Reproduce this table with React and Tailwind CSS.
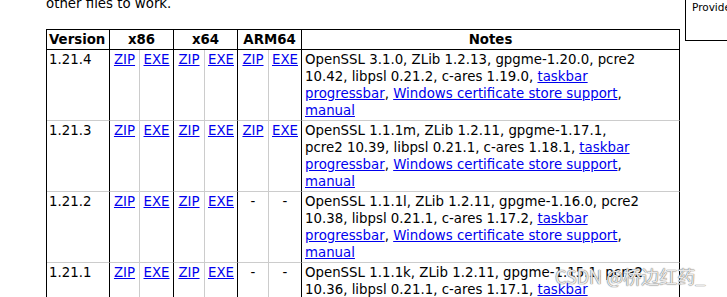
const A = ({ children }) => (
  <a href="#" className="text-[#0000ee] underline">
    {children}
  </a>
)

const rows = [
  {
    v: '1.21.4',
    arm: true,
    notes: [
      'OpenSSL 3.1.0, ZLib 1.2.13, gpgme-1.20.0, pcre2',
      '10.42, libpsl 0.21.2, c-ares 1.19.0, ',
    ],
  },
  {
    v: '1.21.3',
    arm: true,
    notes: [
      'OpenSSL 1.1.1m, ZLib 1.2.11, gpgme-1.17.1,',
      'pcre2 10.39, libpsl 0.21.1, c-ares 1.18.1, ',
    ],
  },
  {
    v: '1.21.2',
    arm: false,
    notes: [
      'OpenSSL 1.1.1l, ZLib 1.2.11, gpgme-1.16.0, pcre2',
      '10.38, libpsl 0.21.1, c-ares 1.17.2, ',
    ],
  },
  {
    v: '1.21.1',
    arm: false,
    notes: [
      'OpenSSL 1.1.1k, ZLib 1.2.11, gpgme-1.15.1, pcre2',
      '10.36, libpsl 0.21.1, c-ares 1.17.1, ',
    ],
  },
]

const gray = 'border-r border-b border-r-[#cccccc] border-b-[#cccccc]'
const black = 'border-r border-b border-r-black border-b-[#cccccc]'

export default function App() {
  return (
    <div
      className="relative w-[727px] h-[297px] overflow-hidden bg-white text-black text-[13.33px] leading-[17px]"
      style={{ fontFamily: '"DejaVu Sans", Verdana, sans-serif' }}
    >
      <div className="flex">
        <div className="w-[685px] shrink-0 pl-[46px]">
          <p className="mt-[-5px] mb-[17px]">other files to work.</p>
          <table className="border-separate border-spacing-0 table-fixed w-[634px] border-t border-l border-black">
            <colgroup>
              <col className="w-[63px]" />
              <col className="w-[30px]" />
              <col className="w-[34px]" />
              <col className="w-[31px]" />
              <col className="w-[33px]" />
              <col className="w-[31px]" />
              <col className="w-[33px]" />
              <col className="w-[378px]" />
            </colgroup>
            <thead>
              <tr className="font-bold">
                <th className="border-r border-b border-black py-px px-0.5 text-left">Version</th>
                <th colSpan={2} className="border-r border-b border-black py-px">x86</th>
                <th colSpan={2} className="border-r border-b border-black py-px">x64</th>
                <th colSpan={2} className="border-r border-b border-black py-px">ARM64</th>
                <th className="border-r border-b border-black py-px">Notes</th>
              </tr>
            </thead>
            <tbody>
              {rows.map((r) => (
                <tr key={r.v}>
                  <td className={`${black} align-top py-px px-0.5`}>{r.v}</td>
                  <td className={`${gray} align-top py-px text-center`}><A>ZIP</A></td>
                  <td className={`${black} align-top py-px text-center`}><A>EXE</A></td>
                  <td className={`${gray} align-top py-px text-center`}><A>ZIP</A></td>
                  <td className={`${black} align-top py-px text-center`}><A>EXE</A></td>
                  {r.arm ? (
                    <>
                      <td className={`${gray} align-top py-px text-center`}><A>ZIP</A></td>
                      <td className={`${black} align-top py-px text-center`}><A>EXE</A></td>
                    </>
                  ) : (
                    <>
                      <td className={`${gray} align-top py-px text-center`}>-</td>
                      <td className={`${black} align-top py-px text-center`}>-</td>
                    </>
                  )}
                  <td className={`${black} align-top py-px px-[3px] whitespace-nowrap`}>
                    {r.notes[0]}
                    <br />
                    {r.notes[1]}
                    <A>taskbar</A>
                    <br />
                    <A>progressbar</A>, <A>Windows certificate store support</A>,
                    <br />
                    <A>manual</A>
                  </td>
                </tr>
              ))}
            </tbody>
          </table>
        </div>
        <div className="w-[200px] shrink-0 h-[51px] mt-[-10px] border border-black pl-[6px] pt-[9px] text-[10.5px] leading-[14px]">
          Provide
        </div>
      </div>
      {/* csdn watermark */}
      <div
        className="absolute left-[555px] top-[263px] text-[18px] leading-[26px] text-white/85 [text-shadow:0_0_1px_#666,0_0_1px_#666] whitespace-nowrap"
        style={{ fontFamily: '"Noto Sans CJK SC", sans-serif' }}
      >
        CSDN @桥边红药_
      </div>
    </div>
  )
}
